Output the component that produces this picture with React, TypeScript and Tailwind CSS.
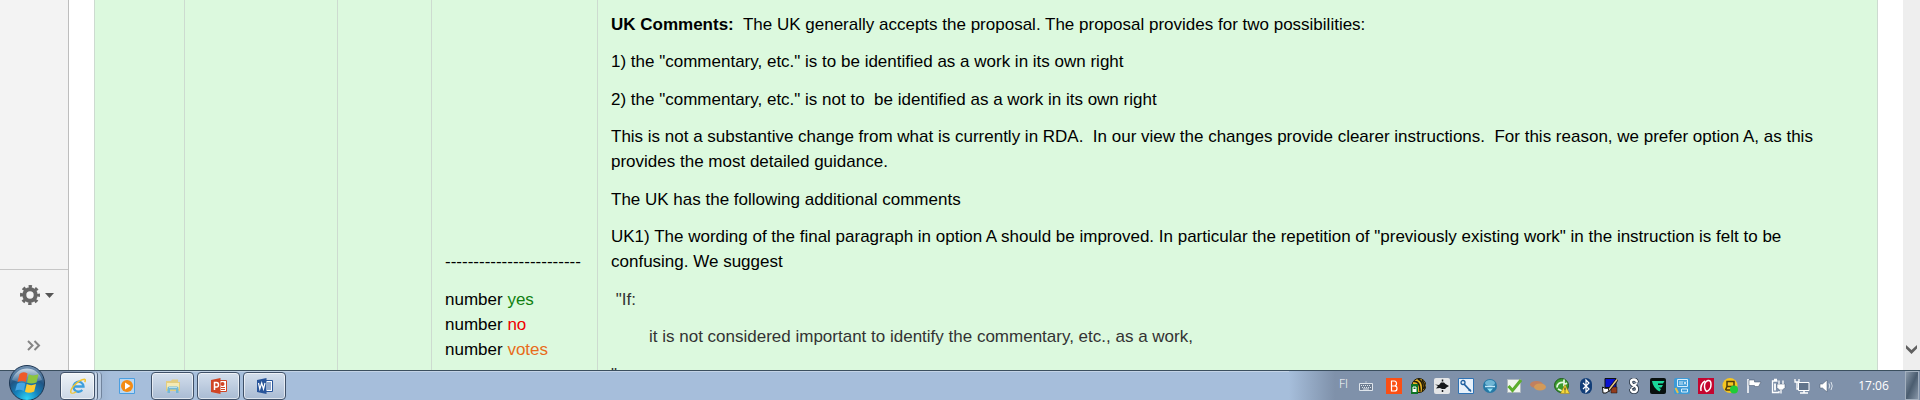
import type { ReactNode } from 'react';

const TRAY_ICON = 'h-4 w-4';

const StartOrb = () => (
  <svg viewBox="0 0 36 36" className="h-9 w-9">
    <defs>
      <radialGradient id="orb" cx="50%" cy="95%" r="95%">
        <stop offset="0%" stopColor="#2fd4f4" />
        <stop offset="35%" stopColor="#1583bd" />
        <stop offset="65%" stopColor="#205584" />
        <stop offset="100%" stopColor="#7996b4" />
      </radialGradient>
      <linearGradient id="shine" x1="0" y1="0" x2="0" y2="1">
        <stop offset="0%" stopColor="#dbe6f0" stopOpacity="0.85" />
        <stop offset="100%" stopColor="#a5c0d8" stopOpacity="0.25" />
      </linearGradient>
    </defs>
    <circle cx="18" cy="18" r="17.5" fill="url(#orb)" stroke="#1d3652" />
    <path d="M3 15 A15.5 15.5 0 0 1 33 15 Q18 21 3 15Z" fill="url(#shine)" />
    <path d="M10.500 9 Q14 6 18.500 8.500 L16.800 17 Q12.500 14.800 8.500 17Z" fill="#ee5a29" />
    <path d="M19.800 9.300 Q23.500 11.500 29.500 9.300 L27.500 17.500 Q22 19.500 18 17.500Z" fill="#8cc540" />
    <path d="M8 18.700 Q12 16.300 16.400 18.500 L14.700 26 Q10.500 23.800 6.200 25.800Z" fill="#45a5e4" />
    <path d="M17.700 19 Q22 21.300 27 19 L25.200 26.500 Q20 29 16 26.800Z" fill="#fdca30" />
  </svg>
);

const ExplorerIcon = () => (
  <svg viewBox="0 0 16 16" className={TRAY_ICON}>
    <path d="M4 8.500h9.500A5 5 0 1 0 12.300 12" fill="none" stroke="#3d9fdd" strokeWidth="2.300" />
    <path d="M1.200 15C-1 12 8 1.500 14.500 1.200c1.300.2.800 2 .2 3" fill="none" stroke="#f0c433" strokeWidth="1.500" />
    <path d="M1.200 15q2 .8 5-1.200" fill="none" stroke="#f0c433" strokeWidth="1.200" />
  </svg>
);

const MediaIcon = () => (
  <svg viewBox="0 0 16 16" className={TRAY_ICON}>
    <path d="M.5.500h15v15H.5z" fill="#b9d7f2" stroke="#4a9ee0" />
    <circle cx="8" cy="8" r="6" fill="#f38b13" />
    <path d="M6 4.500l5.500 3.500L6 11.500z" fill="#fff" />
  </svg>
);

const FolderIcon = () => (
  <svg viewBox="0 0 16 16" className={TRAY_ICON}>
    <path d="M1 3h5l1-1.500h6V4h2v9H1z" fill="#e3cd80" />
    <path d="M2 5h12v6H2z" fill="#f5eab5" />
    <path d="M2.500 15v-5q0-1.500 1.500-1.500h8q1.500 0 1.500 1.500v5h-2.500v-3.500h-6V15z" fill="#72b8d6" />
    <path d="M4 9.500h8" stroke="#b7e0ef" />
  </svg>
);

const PowerPointIcon = () => (
  <svg viewBox="0 0 16 16" className={TRAY_ICON}>
    <path d="M8 2.500h7.500v11H8z" fill="#fff" stroke="#d04525" />
    <path d="M10 9.500h4M10 11.500h4" stroke="#d04525" />
    <circle cx="11.500" cy="6" r="2" fill="#d04525" />
    <path d="M0 2l9.500-2v16L0 14z" fill="#d04525" />
    <path d="M3.500 12V4.500h2q2 0 2 2.300t-2 2.200h-2" fill="none" stroke="#fff" strokeWidth="1.500" />
  </svg>
);

const WordIcon = () => (
  <svg viewBox="0 0 16 16" className={TRAY_ICON}>
    <path d="M8 2.500h7.500v11H8z" fill="#fff" stroke="#28549a" />
    <path d="M10 5h4M10 7h4M10 9h4M10 11h4" stroke="#28549a" />
    <path d="M0 2l9.500-2v16L0 14z" fill="#28549a" />
    <path d="M1.500 5l1.300 6L4.700 5l1.800 6L8 5" fill="none" stroke="#fff" strokeWidth="1.200" />
  </svg>
);

const KeyboardIcon = () => (
  <svg viewBox="0 0 16 12" className="h-3 w-4">
    <path d="M1.500 3.500h13v7h-13z" fill="#6d7d92" stroke="#dfe5ec" />
    <path d="M3 5.500h10M4 7.500h9" stroke="#dfe5ec" strokeDasharray="1 1" />
    <path d="M5 9h6" stroke="#dfe5ec" />
    <path d="M8 1v2" stroke="#b3bfcd" />
  </svg>
);

const trayIcons: { name: string; art: ReactNode }[] = [
  {
    name: 'B client',
    art: (
      <>
        <path d="M0 0h16v16H0z" fill="#fb4f14" />
        <path d="M5.500 3v10h3q2.500 0 2.500-2.600T8.500 8h-3 3q2-.200 2-2.500T8.300 3z" fill="none" stroke="#fff" strokeWidth="1.200" />
      </>
    ),
  },
  {
    name: 'Secure browser',
    art: (
      <>
        <circle cx="9" cy="7.500" r="7" fill="#e8b324" stroke="#221c08" />
        <path d="M4 3.500q6-1 6 10M8 1q6 3 4.500 12M12 2q3.500 4 2 9" fill="none" stroke="#221c08" strokeWidth="1.500" />
        <path d="M1 6h7v10H1z" fill="#0e7425" />
        <path d="M3 11V9h3v2" fill="none" stroke="#fff" />
        <path d="M2.500 11h4v3h-4z" fill="#fff" />
      </>
    ),
  },
  {
    name: 'Bug tool',
    art: (
      <>
        <rect width="16" height="16" rx="2" fill="#e3e5e7" />
        <path d="M1 6.500l4 .5L7 4.500h3L11.500 6l3.500 2-2.500 1.500L11 11H8l-2-1-4 .5L4 8z" fill="#16181b" />
        <path d="M8.500 1.500v2M8.500 12v2" stroke="#16181b" strokeWidth="1.500" />
      </>
    ),
  },
  {
    name: 'Settings tool',
    art: (
      <>
        <path d="M.5.500h15v15H.5z" fill="#e8f1fa" stroke="#2f73b5" />
        <path d="M6 6l7 7.500" stroke="#1e5f9f" strokeWidth="1.800" />
        <circle cx="5" cy="4.500" r="2" fill="none" stroke="#1e5f9f" strokeWidth="1.300" />
        <path d="M10.500 13l2-2" fill="none" stroke="#1e5f9f" />
      </>
    ),
  },
  {
    name: 'Wireless',
    art: (
      <>
        <circle cx="8" cy="8" r="7" fill="#2579a6" />
        <ellipse cx="8" cy="5" rx="5" ry="3" fill="#6fb6d5" />
        <path d="M3 8.500h10" stroke="#c4eafa" strokeWidth="1.500" />
        <path d="M5 10.500h6l-3 3.500z" fill="#8fe4f8" />
      </>
    ),
  },
  {
    name: 'Checked',
    art: (
      <>
        <path d="M1.500 1.500h13v13h-13z" fill="#f1f5ee" stroke="#aeb8bf" />
        <path d="M2.500 8l4 4.500L15 2" fill="none" stroke="#5dae2d" strokeWidth="3" />
      </>
    ),
  },
  {
    name: 'Cloud',
    art: (
      <>
        <ellipse cx="6.500" cy="6.500" rx="6.500" ry="3.500" fill="#c08060" />
        <ellipse cx="10" cy="9" rx="6" ry="3.500" fill="#d39a58" />
      </>
    ),
  },
  {
    name: 'Sync warning',
    art: (
      <>
        <circle cx="7.500" cy="7.500" r="7" fill="#3b9b2e" stroke="#205f1a" />
        <path d="M3 9.500q0-5.500 7-5M10 1.500V7l3-2M4 11l4 2" fill="none" stroke="#e3f7df" strokeWidth="1.800" />
        <path d="M11 6.500l4.500 9h-9z" fill="#f8d83a" stroke="#9c7e0e" strokeWidth=".5" />
        <path d="M11 9.500v3M11 13.500v1" stroke="#222" />
      </>
    ),
  },
  {
    name: 'Bluetooth',
    art: (
      <>
        <rect x="2" width="12" height="16" rx="6" fill="#123e78" />
        <path d="M5 5l6 6-3 3V2l3 3-6 6" fill="none" stroke="#fff" strokeWidth="1.200" />
      </>
    ),
  },
  {
    name: 'Display settings',
    art: (
      <>
        <path d="M3 .5h11v9H3z" fill="#0a12d0" stroke="#111" />
        <path d="M9 9h6v6H9z" fill="#923b1d" stroke="#111" strokeWidth=".5" />
        <path d="M6 13l9-11.500" stroke="#111" strokeWidth="3" />
        <path d="M6 13l9-11.500" stroke="#e9c78a" strokeWidth="1.500" />
        <path d="M.5 9q3 2.500 5.500 1l1 3-3 2H1z" fill="#fff" stroke="#111" />
      </>
    ),
  },
  {
    name: 'Link',
    art: (
      <>
        <path d="M11 4.500Q10.500 1.500 8 1.500q-3 0-3 2.500t3 3.500 3 3.500q0 3-3 3t-3-3" fill="none" stroke="#2a3747" strokeWidth="4" />
        <path d="M11 5.500L7 7.500M5 11l4-3" stroke="#2a3747" strokeWidth="3" />
        <path d="M11 4.500Q10.500 1.500 8 1.500q-3 0-3 2.500t3 3.500 3 3.500q0 3-3 3t-3-3" fill="none" stroke="#fff" strokeWidth="2.300" />
        <path d="M11 5.500L7.500 7M5 10.500l3-2" stroke="#fff" strokeWidth="1.500" />
      </>
    ),
  },
  {
    name: 'Secure client',
    art: (
      <>
        <rect width="16" height="16" rx="2" fill="#08100e" />
        <path d="M2 3h12.500l-1.500 2.500H8V7h5l-1.500 2.500H8.500L11 11l-1.500 2.500Q3 10 2 3z" fill="#1bd89b" />
      </>
    ),
  },
  {
    name: 'Graphics',
    art: (
      <>
        <rect width="16" height="16" rx="2" fill="#3d9ad6" />
        <path d="M3.500 1.500h10v7h-10zM6 3v4M8 3v4M10 3.500l2 3M12 3.500l-2 3M7.500 11h6v3h-6z" fill="none" stroke="#d8effc" />
        <path d="M1.500 10l2.500 5" stroke="#e8bf4a" strokeWidth="2" />
      </>
    ),
  },
  {
    name: 'Reader',
    art: (
      <>
        <path d="M0 0h16v16H0z" fill="#c4052f" />
        <path d="M8.500 13.500Q13 12 13 6.500 13 2 10 2.500 6 4 6.500 9q.3 3 2 4.500z" fill="none" stroke="#fff" strokeWidth="1.500" />
        <path d="M7 3Q2 6 3 13" fill="none" stroke="#fff" strokeWidth="1.500" />
      </>
    ),
  },
  {
    name: 'Presence',
    art: (
      <>
        <circle cx="8" cy="7.500" r="7.500" fill="#f5c521" />
        <path d="M5 3.500h7v5H5zM3.500 12h5M5 8.500L3.500 12" fill="none" stroke="#4d3b08" strokeWidth="1.500" />
        <circle cx="12" cy="11.500" r="4" fill="#20cc35" />
      </>
    ),
  },
  {
    name: 'Action centre',
    art: (
      <>
        <path d="M2 1v14" stroke="#fff" strokeWidth="1.500" />
        <path d="M3 2h5.500v2h6.500l-2.500 4.500H8.500V7.500H3z" fill="#fff" stroke="#3f4f64" strokeWidth=".5" />
      </>
    ),
  },
  {
    name: 'Power',
    art: (
      <>
        <path d="M7.500 3H2.500v11.500H9V13M4 1.500h3" fill="none" stroke="#fff" strokeWidth="1.300" />
        <path d="M5 5.500v7" stroke="#fff" strokeWidth="1.800" />
        <path d="M7 6h8v3.500L12.500 12h-3L7 9.500z" fill="#fff" stroke="#4b5b70" strokeWidth=".5" />
        <path d="M9 2.500V6M13 2.500V6M11 12v3.500" stroke="#fff" strokeWidth="1.300" />
      </>
    ),
  },
  {
    name: 'Network',
    art: (
      <>
        <path d="M4.500 4.500h10.500v8H4.500z" fill="#62748b" stroke="#fff" />
        <path d="M6 15h8M10 13v2" stroke="#fff" strokeWidth="1.500" />
        <path d="M1 1v3h4V1M3 4v7h1" fill="none" stroke="#fff" strokeWidth="1.300" />
      </>
    ),
  },
  {
    name: 'Volume',
    art: (
      <>
        <path d="M2 6h2.500L9 2v12l-4.500-4H2z" fill="#fff" stroke="#46566a" strokeWidth=".5" />
        <path d="M11 5.500q1.500 2.500 0 5M13 4q2.500 4 0 8" fill="none" stroke="#dce3eb" />
      </>
    ),
  },
];

const TaskButton = ({ label, children }: { label: string; children: ReactNode }) => (
  <button
    aria-label={label}
    className="flex h-full w-[43px] items-center justify-center rounded-sm border border-[#3f5068] bg-linear-to-b from-[#d3deec] to-[#a9bbd3] inset-ring inset-ring-white/60"
  >
    {children}
  </button>
);

const Sidebar = () => (
  <aside className="flex w-[69px] shrink-0 flex-col justify-end border-r border-[#bdbdbd] bg-[#f3f3f3]">
    <div className="flex h-[101px] flex-col border-t border-[#c6c6c6] pt-[15px] pl-5">
      <button aria-label="Settings" className="flex items-center gap-[5px]">
        <svg viewBox="0 0 20 20" className="h-5 w-5">
          <circle cx="10" cy="10" r="5.700" fill="none" stroke="#666" strokeWidth="4" />
          <circle cx="10" cy="10" r="8.500" fill="none" stroke="#666" strokeWidth="3" strokeDasharray="3.340 3.340" strokeDashoffset="1.670" />
        </svg>
        <svg viewBox="0 0 9 5" className="h-[5px] w-[9px]">
          <path d="M0 0h9L4.500 5z" fill="#555" />
        </svg>
      </button>
      <button aria-label="Expand" className="mt-[35px] ml-[7px] w-[14px]">
        <svg viewBox="0 0 14 11" className="h-[11px] w-[14px]">
          <path d="M1 1l4.500 4.500L1 10M7.500 1l4.500 4.500L7.500 10" fill="none" stroke="#858585" strokeWidth="2" />
        </svg>
      </button>
    </div>
  </aside>
);

const Comments = () => (
  <div className="[&>p]:odd:mb-3 [&>p]:even:mb-[13px]">
    <p>
      <b>UK Comments:</b>&nbsp; The UK generally accepts the proposal. The proposal provides for two possibilities:
    </p>
    <p>1) the "commentary, etc." is to be identified as a work in its own right</p>
    <p>2) the "commentary, etc." is not to&nbsp; be identified as a work in its own right</p>
    <p>
      This is not a substantive change from what is currently in RDA.&nbsp; In our view the changes provide clearer
      instructions.&nbsp; For this reason, we prefer option A, as this provides the most detailed guidance.
    </p>
    <p>The UK has the following additional comments</p>
    <p>
      UK1) The wording of the final paragraph in option A should be improved. In particular the repetition of
      "previously existing work" in the instruction is felt to be confusing. We suggest
    </p>
    <p className="text-[#333]">&nbsp;"If:</p>
    <p className="pl-[38px] text-[#333]">it is not considered important to identify the commentary, etc., as a work,</p>
    <p className="text-[#333]">"</p>
  </div>
);

const Taskbar = () => (
  <footer className="flex h-[30px] shrink-0 border-t border-[#3b4f5f] bg-[#a6bedb] inset-shadow-[0_1px_0_#c3d3e6]">
    <div className="flex w-[130px] shrink-0 bg-linear-to-r from-[#7f91aa] from-45% to-[#a6bedb] to-85%">
      <button aria-label="Start" className="relative -top-[6px] ml-[9px] h-9 w-9 shrink-0">
        <StartOrb />
      </button>
      <div className="ml-[15px] flex pt-px">
        <button
          aria-label="Internet Explorer"
          className="flex h-full w-[35px] items-center justify-center rounded-sm border border-[#3f5068] bg-linear-to-b from-[#eef3f8] to-[#cbd7e6] inset-ring inset-ring-white/60"
        >
          <ExplorerIcon />
        </button>
        <div className="w-[3px] rounded-r-sm border-r border-[#53657d] bg-[#c9d7e8]"></div>
        <div className="w-1 rounded-r-sm border-r border-[#71849d] bg-[#b7c9df]"></div>
      </div>
    </div>
    <div className="-ml-[11px] flex items-center">
      <button aria-label="Media Player">
        <MediaIcon />
      </button>
    </div>
    <div className="ml-4 flex gap-[3px] pt-px">
      <TaskButton label="Explorer">
        <FolderIcon />
      </TaskButton>
      <TaskButton label="PowerPoint">
        <PowerPointIcon />
      </TaskButton>
      <TaskButton label="Word">
        <WordIcon />
      </TaskButton>
    </div>

    {/* Notification area */}
    <div className="ml-auto flex items-center bg-linear-to-r from-[#a6bedb] to-[#7f91aa] to-[46px] pl-[50px] font-['Open_Sans',sans-serif] text-xs text-white">
      <span className="pb-1 font-light">FI</span>
      <div className="ml-[10px] flex w-6">
        <KeyboardIcon />
      </div>
      {trayIcons.map((icon) => (
        <button key={icon.name} aria-label={icon.name} className="flex w-6 justify-center">
          <svg viewBox="0 0 16 16" className={TRAY_ICON}>
            {icon.art}
          </svg>
        </button>
      ))}
      <time className="w-[67px] pl-1 text-center">17:06</time>
      <button
        aria-label="Show desktop"
        className="mr-px h-full w-[14px] border border-[#a3b0bf] bg-linear-to-br from-[#8b9aab] via-[#4b5d70] to-[#8796a8]"
      ></button>
    </div>
  </footer>
);

const App = () => {
  return (
    <div className="flex h-screen flex-col overflow-hidden bg-white font-['Liberation_Sans',Arial,sans-serif]">
      <div className="flex min-h-0 flex-1 overflow-hidden">
        <Sidebar />
        <main className="min-w-0 flex-1 overflow-hidden px-[25px]">
          <table className="w-full table-fixed border-separate border-spacing-0 bg-[#dcf9de] text-[17px] leading-[25px] text-black [&_td]:border-l [&_td]:border-[#cddbd0]">
            <colgroup>
              <col className="w-[90px]" />
              <col className="w-[153px]" />
              <col className="w-[94px]" />
              <col className="w-[166px]" />
              <col />
            </colgroup>
            <tbody>
              <tr className="align-top">
                <td></td>
                <td></td>
                <td></td>
                <td className="pt-[249px] pl-[13px] whitespace-nowrap">
                  <p className="mb-[13px]">------------------------</p>
                  <p>
                    number <span className="text-[#108010]">yes</span>
                  </p>
                  <p>
                    number <span className="text-[#f00000]">no</span>
                  </p>
                  <p>
                    number <span className="text-[#e86c1a]">votes</span>
                  </p>
                </td>
                <td className="border-r pt-3 pr-[18px] pl-[13px]">
                  <Comments />
                </td>
              </tr>
            </tbody>
          </table>
        </main>
        {/* Scrollbar track */}
        <div className="flex w-[17px] shrink-0 items-end justify-center bg-[#eee] pb-4">
          <button aria-label="Scroll down">
            <svg viewBox="0 0 11 9" className="h-[9px] w-[11px]">
              <path d="M0 0l5.500 5L11 0v3.500L5.500 9 0 3.500z" fill="#606060" />
            </svg>
          </button>
        </div>
      </div>
      <Taskbar />
    </div>
  );
};

export default App;
